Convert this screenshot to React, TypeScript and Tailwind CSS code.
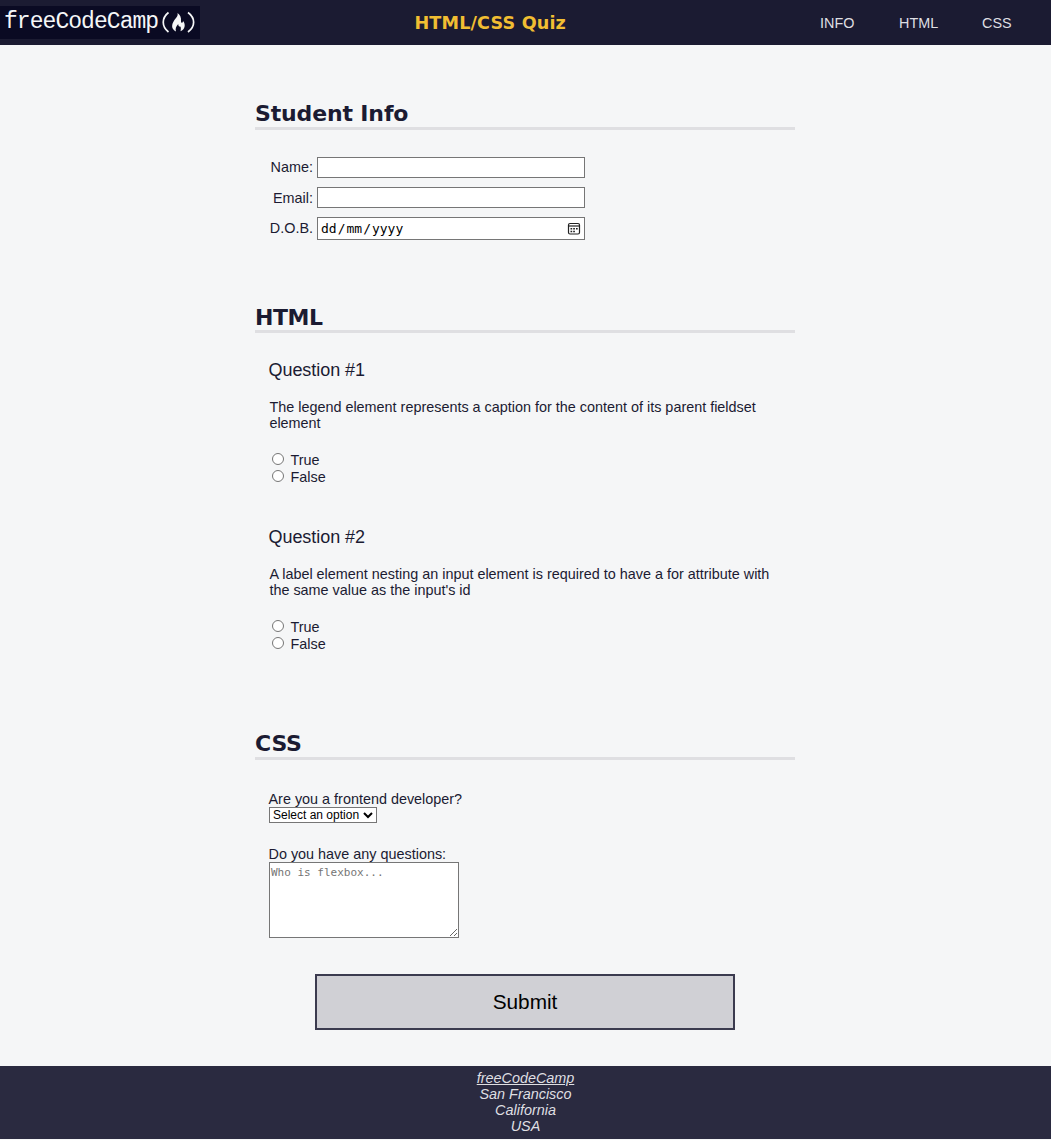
function Heading({ text }: { text: string }) {
  return (
    <h2 className="box-content h-[28px] border-b-[3px] border-[#dfdfe2] font-['DejaVu_Sans',sans-serif] text-[22px] leading-[30px] font-bold tracking-[-0.15px] whitespace-nowrap">
      {text}
    </h2>
  );
}

function Question({ title, lines }: { title: string; lines: string[] }) {
  return (
    <fieldset className="h-[167px]">
      <h3 className="ml-[13.500px] h-[22px] text-[18px] leading-[22px] tracking-[-0.05px]">{title}</h3>
      <p className="mt-[18px] ml-[14.400px] h-8 leading-4 whitespace-nowrap">
        {lines.map((line) => (
          <span className="block" key={line}>{line}</span>
        ))}
      </p>
      <div className="mt-[21px] ml-[17px]">
        {['True', 'False'].map((option) => (
          <label key={option} className="flex h-[17px] items-start">
            <input
              type="radio"
              name={title}
              className="mt-px h-[12px] w-[12px] shrink-0 appearance-none rounded-full border border-[#767676] bg-white"
            />
            <span className="ml-[6.500px] leading-4">{option}</span>
          </label>
        ))}
      </div>
    </fieldset>
  );
}

function Logo() {
  return (
    <div className="flex h-[33px] w-[200px] bg-[#0a0a23] text-[#f5f6f7]">
      <span className="ml-[4px] h-[33px] w-[154px] font-['Liberation_Mono',monospace] text-[23px] leading-[33px] tracking-[-0.95px]">
        freeCodeCamp
      </span>
      <svg width="42" height="33" viewBox="0 0 42 33" fill="none">
        <path d="M10.500 6.500C3.500 12 3.500 20.500 10.500 26M30 6.500C37.500 12 37.500 20.500 30 26" stroke="currentColor" strokeWidth="1.700" />
        <path d="M19.500 7C20.500 10.500 17 12.500 15.300 16C13 20.500 14.300 23.500 18 25.500C17 22.500 18.200 20.500 20.200 18C20.300 20 21 20.500 22 20.500C22.800 20.500 23.200 22.500 22.500 25.200C27 23.500 28 18.500 25 15C25 17.300 22.800 17.500 23 15C23.400 11.500 22 8.500 19.500 7Z" fill="currentColor" />
      </svg>
    </div>
  );
}

function CalendarIcon() {
  return (
    <svg width="14" height="14" viewBox="0 0 14 14" fill="none" className="text-[#222]">
      <rect x="1.500" y="1.500" width="11" height="10.500" rx="1.500" stroke="currentColor" strokeWidth="1.200" />
      <path d="M1.500 4H12.500" stroke="currentColor" strokeWidth="1.200" />
      <path d="M3.500 6h1.700v1.600H3.500zM6.200 6h1.700v1.600H6.200zM9 6h1.700v1.600H9zM3.500 8.700h1.700v1.600H3.500zM6.200 8.700h1.700v1.600H6.200z" fill="currentColor" />
    </svg>
  );
}

const fields = [
  { label: 'Name:', shift: 'pt-0' },
  { label: 'Email:', shift: 'pt-[2px]' },
];

export default function App() {
  return (
    <div className="h-[1140px] bg-[#f5f6f7] font-['Liberation_Sans',sans-serif] text-[14.4px] text-[#1b1b32]">
      <header className="flex h-[45px] items-center bg-[#1b1b32]">
        <Logo />
        <h1 className="mt-px ml-[214.500px] w-[405.500px] font-['DejaVu_Sans',sans-serif] text-[17.600px] font-bold tracking-[0.15px] whitespace-nowrap text-[#f1be32]">
          HTML/CSS Quiz
        </h1>
        <nav className="mt-[2px] flex text-[#dfdfe2]">
          <a className="w-[79px]">INFO</a>
          <a className="w-[83px]">HTML</a>
          <a>CSS</a>
        </nav>
      </header>
      <main className="ml-[255px] h-[1021px] w-[540px]">
        <section className="h-[203px] pt-[54px]">
          <Heading text="Student Info" />
          <div className="mt-[27px]">
            {fields.map(({ label, shift }) => (
              <label key={label} className="mb-[9px] flex h-[21px] items-center">
                <span className={`w-[58px] text-right ${shift}`}>{label}</span>
                <input className="ml-[4px] h-[21px] w-[268px] border border-[#767676] bg-white" />
              </label>
            ))}
            <div className="flex h-[23px] items-center">
              <span className="w-[58px] text-right">D.O.B.</span>
              <span className="ml-[4px] flex h-[23px] w-[268px] items-center justify-between border border-[#767676] bg-white pr-[3px] pl-[3px] text-black">
                <span className="flex gap-[1px] font-['DejaVu_Sans_Mono',monospace] text-[13px]">
                  <span>dd</span><span>/</span><span>mm</span><span>/</span><span>yyyy</span>
                </span>
                <CalendarIcon />
              </span>
            </div>
          </div>
        </section>
        <section className="h-[427px] pt-[54px]">
          <h2 className="box-content h-[28px] border-b-[3px] border-[#dfdfe2] font-['DejaVu_Sans',sans-serif] text-[22px] leading-[32px] font-bold tracking-[-0.4px]">
            HTML
          </h2>
          <div className="mt-[26px]">
            <Question
              title="Question #1"
              lines={['The legend element represents a caption for the content of its parent fieldset', 'element']}
            />
            <Question
              title="Question #2"
              lines={['A label element nesting an input element is required to have a for attribute with', "the same value as the input's id"]}
            />
          </div>
        </section>
        <section className="pt-[54px]">
          <Heading text="CSS" />
          <div className="mt-[31px] ml-[13.500px]">
            <div className="leading-4">Are you a frontend developer?</div>
            <button className="ml-[0.500px] flex h-4 w-[108px] items-center border border-[#767676] bg-white pl-[3px] text-[12px] text-black">
              Select an option
              <svg width="10" height="8" viewBox="0 0 10 8" fill="none" className="ml-[4px]">
                <path d="M1 2L5 6L9 2" stroke="currentColor" strokeWidth="2" />
              </svg>
            </button>
            <div className="mt-[23px] leading-4">Do you have any questions:</div>
            <textarea
              placeholder="Who is flexbox..."
              className="ml-[0.500px] block h-[76px] w-[190px] resize border border-[#767676] bg-white px-px py-[2px] font-['DejaVu_Sans_Mono',monospace] text-[11px] leading-[15px] placeholder:text-[#757575]"
            />
          </div>
          <button className="mt-[36px] ml-[60px] block h-[56px] w-[420px] border-2 border-[#3b3b4f] bg-[#d0d0d5] text-[20.8px] text-black">
            Submit
          </button>
        </section>
      </main>
      <footer className="h-[73px] bg-[#2a2a40] pt-1 text-center leading-4 text-[#dfdfe2] italic">
        <a className="underline">freeCodeCamp</a>
        <div>San Francisco</div>
        <div>California</div>
        <div>USA</div>
      </footer>
    </div>
  );
}
